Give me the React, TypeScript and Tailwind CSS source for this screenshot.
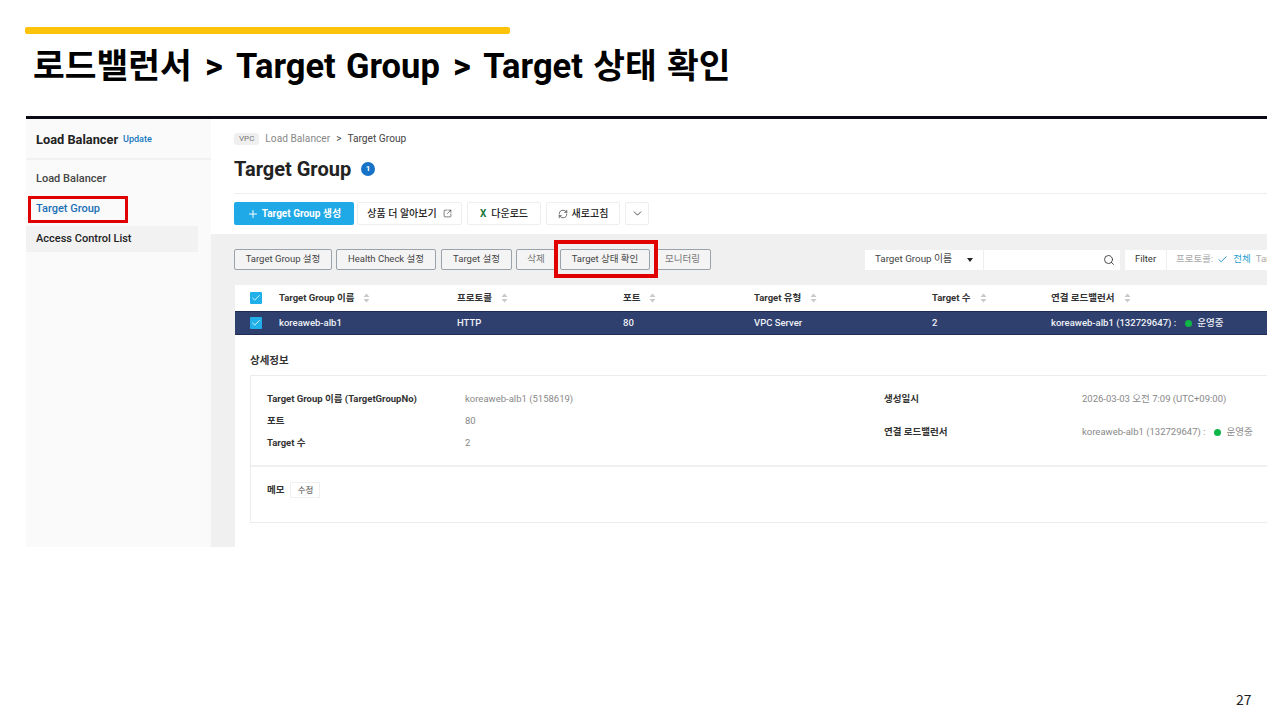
import { FC, ReactNode } from 'react'
import { Check, ChevronDown, Plus, RefreshCw, Search, SquareArrowOutUpRight } from 'lucide-react'

const Sort: FC = () => (
  <svg width="7" height="10" viewBox="0 0 7 10" className="ml-[9px] shrink-0">
    <path d="M3.5 0.5 6.5 4H0.5Z M3.5 9.5 0.5 6H6.5Z" fill="#c9c9c9" />
  </svg>
)

const Checkbox: FC = () => (
  <span className="flex h-[12px] w-[12px] items-center justify-center rounded-[1px] bg-[#1fb0ea]">
    <Check size={10} strokeWidth={2} color="#fff" />
  </span>
)

const ToolButton: FC<{ className: string; children: ReactNode }> = ({ className, children }) => (
  <button className={`flex h-[23px] items-center justify-center rounded-[2px] border border-[#eeeeee] bg-white text-[10px] font-medium text-[#222] ${className}`}>
    {children}
  </button>
)

const ActionButton: FC<{ className: string; label: string; muted?: boolean }> = ({ className, label, muted }) => (
  <button className={`flex h-[21px] items-center justify-center rounded-[2px] border border-[#9aa3ab] bg-[#f4f4f4] text-[9.5px] ${muted ? 'text-[#777]' : 'text-[#444]'} ${className}`}>
    {label}
  </button>
)

const Running: FC = () => (
  <>
    <span className="ml-[9px] mr-[5px] h-[7px] w-[7px] rounded-full bg-[#0fb648]" />
    <span>운영중</span>
  </>
)

const Sidebar: FC = () => (
  <aside className="w-[185px] shrink-0 bg-[#fafafa]">
    <div className="flex h-[41px] items-center border-b-2 border-[#f1f1f1] pl-[10px] pt-[3px]">
      <span className="text-[12.8px] font-bold text-[#222]">Load Balancer</span>
      <span className="ml-[5px] text-[9px] font-medium text-[#1677bd]">Update</span>
    </div>
    <div className="pt-[4px] text-[11px] font-medium">
      <div className="flex h-[30px] items-center pl-[10px] text-[#444]">Load Balancer</div>
      <div className="mb-[2px] flex h-[30px] items-center pl-[10px] text-[#1a6fb5]">Target Group</div>
      <div className="flex h-[26px] w-[172px] items-center bg-[#f2f2f2] pl-[10px] text-[#222]">Access Control List</div>
    </div>
  </aside>
)

const tableCols = 'grid grid-cols-[44px_178px_166px_131px_178px_119px_1fr] items-center text-[9.5px]'

const headers = ['Target Group 이름', '프로토콜', '포트', 'Target 유형', 'Target 수', '연결 로드밸런서']

const Content: FC = () => (
  <main className="flex min-w-0 flex-1 flex-col">
    <section className="h-[115px] pl-[23px]">
      <div className="flex h-[39px] items-center">
        <span className="rounded-[3px] bg-[#efefef] px-[5px] text-[8px] leading-[12px] text-[#777]">VPC</span>
        <span className="ml-[6px] text-[10.2px] text-[#888]">Load Balancer</span>
        <span className="mx-[6px] text-[10px] text-[#444]">&gt;</span>
        <span className="text-[10.2px] text-[#444]">Target Group</span>
      </div>
      <div className="flex h-[22px] items-center">
        <h1 className="text-[20px] font-bold text-[#222]">Target Group</h1>
        <span className="ml-[10px] flex h-[14px] w-[14px] items-center justify-center rounded-full bg-[#1673c7] text-[8px] font-bold text-white">1</span>
      </div>
      <div className="mt-[13px] h-[1px] bg-[#eeeeee]" />
      <div className="mt-[8px] flex">
        <button className="flex h-[23px] w-[120px] items-center justify-center rounded-[2px] bg-[#1fa9e6] text-[10px] font-bold text-white">
          <Plus size={12} strokeWidth={2} className="mr-[3px]" />
          Target Group 생성
        </button>
        <ToolButton className="ml-[3px] w-[105px]">
          상품 더 알아보기
          <SquareArrowOutUpRight size={9} strokeWidth={1.5} className="ml-[6px]" />
        </ToolButton>
        <ToolButton className="ml-[5px] w-[74px]">
          <span className="mr-[5px] font-bold text-[#1d7a3c]">X</span>다운로드
        </ToolButton>
        <ToolButton className="ml-[5px] w-[74px]">
          <RefreshCw size={10} strokeWidth={1.5} className="mr-[4px]" />새로고침
        </ToolButton>
        <ToolButton className="ml-[5px] w-[24px]">
          <ChevronDown size={13} strokeWidth={1.5} />
        </ToolButton>
      </div>
    </section>
    <section className="flex h-[51px] items-center bg-[#f0f0f0] pl-[23px]">
      <ActionButton className="w-[98px]" label="Target Group 설정" />
      <ActionButton className="ml-[4px] w-[100px]" label="Health Check 설정" />
      <ActionButton className="ml-[5px] w-[71px]" label="Target 설정" />
      <ActionButton className="ml-[4px] w-[40px]" label="삭제" muted />
      <ActionButton className="ml-[4px] w-[90px]" label="Target 상태 확인" />
      <ActionButton className="ml-[4px] w-[57px]" label="모니터링" muted />
      <div className="ml-[154px] flex h-[20px] w-[255px] items-center bg-white text-[9.8px] text-[#444]">
        <span className="flex h-full w-[119px] items-center justify-between border-r border-[#eeeeee] pl-[10px] pr-[10px]">
          Target Group 이름
          <svg width="6" height="4" viewBox="0 0 6 4"><path d="M0 0H6L3 4Z" fill="#222" /></svg>
        </span>
        <span className="flex flex-1 justify-end pr-[5px]">
          <Search size={12} strokeWidth={1.75} color="#333" />
        </span>
      </div>
      <div className="ml-[5px] flex h-[20px] flex-1 items-center overflow-hidden whitespace-nowrap bg-white text-[9.5px]">
        <span className="flex h-full w-[42px] shrink-0 items-center justify-center border-r border-[#eeeeee] text-[#333]">Filter</span>
        <span className="ml-[9px] text-[#aaa]">프로토콜:</span>
        <Check size={11} strokeWidth={2} color="#1a8fc4" className="ml-[4px] shrink-0" />
        <span className="ml-[5px] text-[#2d9fd0]">전체</span>
        <span className="ml-[5px] text-[#aaa]">Target</span>
      </div>
    </section>
    <div className="flex flex-1">
      <div className="w-[24px] shrink-0 bg-[#f0f0f0]" />
      <div className="min-w-0 flex-1">
        <div className={`${tableCols} h-[26px] font-bold text-[#333]`}>
          <span className="pl-[15px]"><Checkbox /></span>
          {headers.map((h) => (
            <span key={h} className="flex items-center">{h}<Sort /></span>
          ))}
        </div>
        <div className={`${tableCols} h-[24px] whitespace-nowrap border-y border-[#1f2c55] bg-[#2f3f6e] font-medium text-[#eef1f7]`}>
          <span className="pl-[15px]"><Checkbox /></span>
          <span>koreaweb-alb1</span>
          <span>HTTP</span>
          <span>80</span>
          <span>VPC Server</span>
          <span>2</span>
          <span className="flex items-center">koreaweb-alb1 (132729647) :<Running /></span>
        </div>
        <div className="pl-[15px] pt-[18px]">
          <h2 className="text-[10.5px] font-bold leading-[16px] text-[#333]">상세정보</h2>
          <div className="mt-[6px] h-[148px] border border-r-0 border-[#ececec] text-[9.5px]">
            <div className="flex h-[91px] border-b-2 border-[#f0f0f0] pl-[16px] pt-[12px]">
              <dl className="grid w-[617px] grid-cols-[198px_1fr] auto-rows-[22px] items-center">
                <dt className="font-bold text-[#333]">Target Group 이름 (TargetGroupNo)</dt>
                <dd className="text-[#888]">koreaweb-alb1 (5158619)</dd>
                <dt className="font-bold text-[#333]">포트</dt>
                <dd className="text-[#888]">80</dd>
                <dt className="font-bold text-[#333]">Target 수</dt>
                <dd className="text-[#888]">2</dd>
              </dl>
              <dl className="grid flex-1 grid-cols-[198px_1fr] grid-rows-[22px_44px] items-center whitespace-nowrap">
                <dt className="font-bold text-[#333]">생성일시</dt>
                <dd className="text-[#888]">2026-03-03 오전 7:09 (UTC+09:00)</dd>
                <dt className="font-bold text-[#333]">연결 로드밸런서</dt>
                <dd className="flex items-center text-[#888]">koreaweb-alb1 (132729647) :<Running /></dd>
              </dl>
            </div>
            <div className="flex items-center pl-[16px] pt-[15px]">
              <span className="font-bold text-[#333]">메모</span>
              <span className="ml-[6px] flex h-[16px] w-[30px] items-center justify-center border border-[#f0f0f0] text-[8.5px] text-[#444]">수정</span>
            </div>
          </div>
        </div>
      </div>
    </div>
  </main>
)

export default function App() {
  return (
    <div className="relative h-[720px] w-[1280px] overflow-hidden bg-white font-['Roboto','Noto_Sans_CJK_KR',sans-serif]">
      <div className="ml-[25px] mt-[27px] h-[7px] w-[485px] rounded-[2px] bg-[#fdc20a]" />
      <h1 className="ml-[33px] mt-[7px] h-[50px] whitespace-nowrap text-[34.5px] font-bold leading-[50px] text-black [word-spacing:1.7px]">
        로드밸런서 <span className="mx-[3px]">&gt;</span> Target Group <span className="mx-[3px]">&gt;</span> Target 상태 확인
      </h1>
      <div className="ml-[26px] mt-[25px] flex h-[431px] w-[1241px] flex-col overflow-hidden border-t-[3px] border-[#0a0a14]">
        <div className="flex flex-1">
          <Sidebar />
          <Content />
        </div>
      </div>
      {/* red highlight boxes from the slide */}
      <div className="absolute left-[28px] top-[196px] h-[27px] w-[100px] border-[3px] border-[#e00000]" />
      <div className="absolute left-[554px] top-[240px] h-[38px] w-[104px] border-[4px] border-[#e00000]" />
      <span className="absolute left-[1236px] top-[689px] font-['Noto_Sans_CJK_KR',sans-serif] text-[14px] leading-[20px] text-[#222]">27</span>
    </div>
  )
}
